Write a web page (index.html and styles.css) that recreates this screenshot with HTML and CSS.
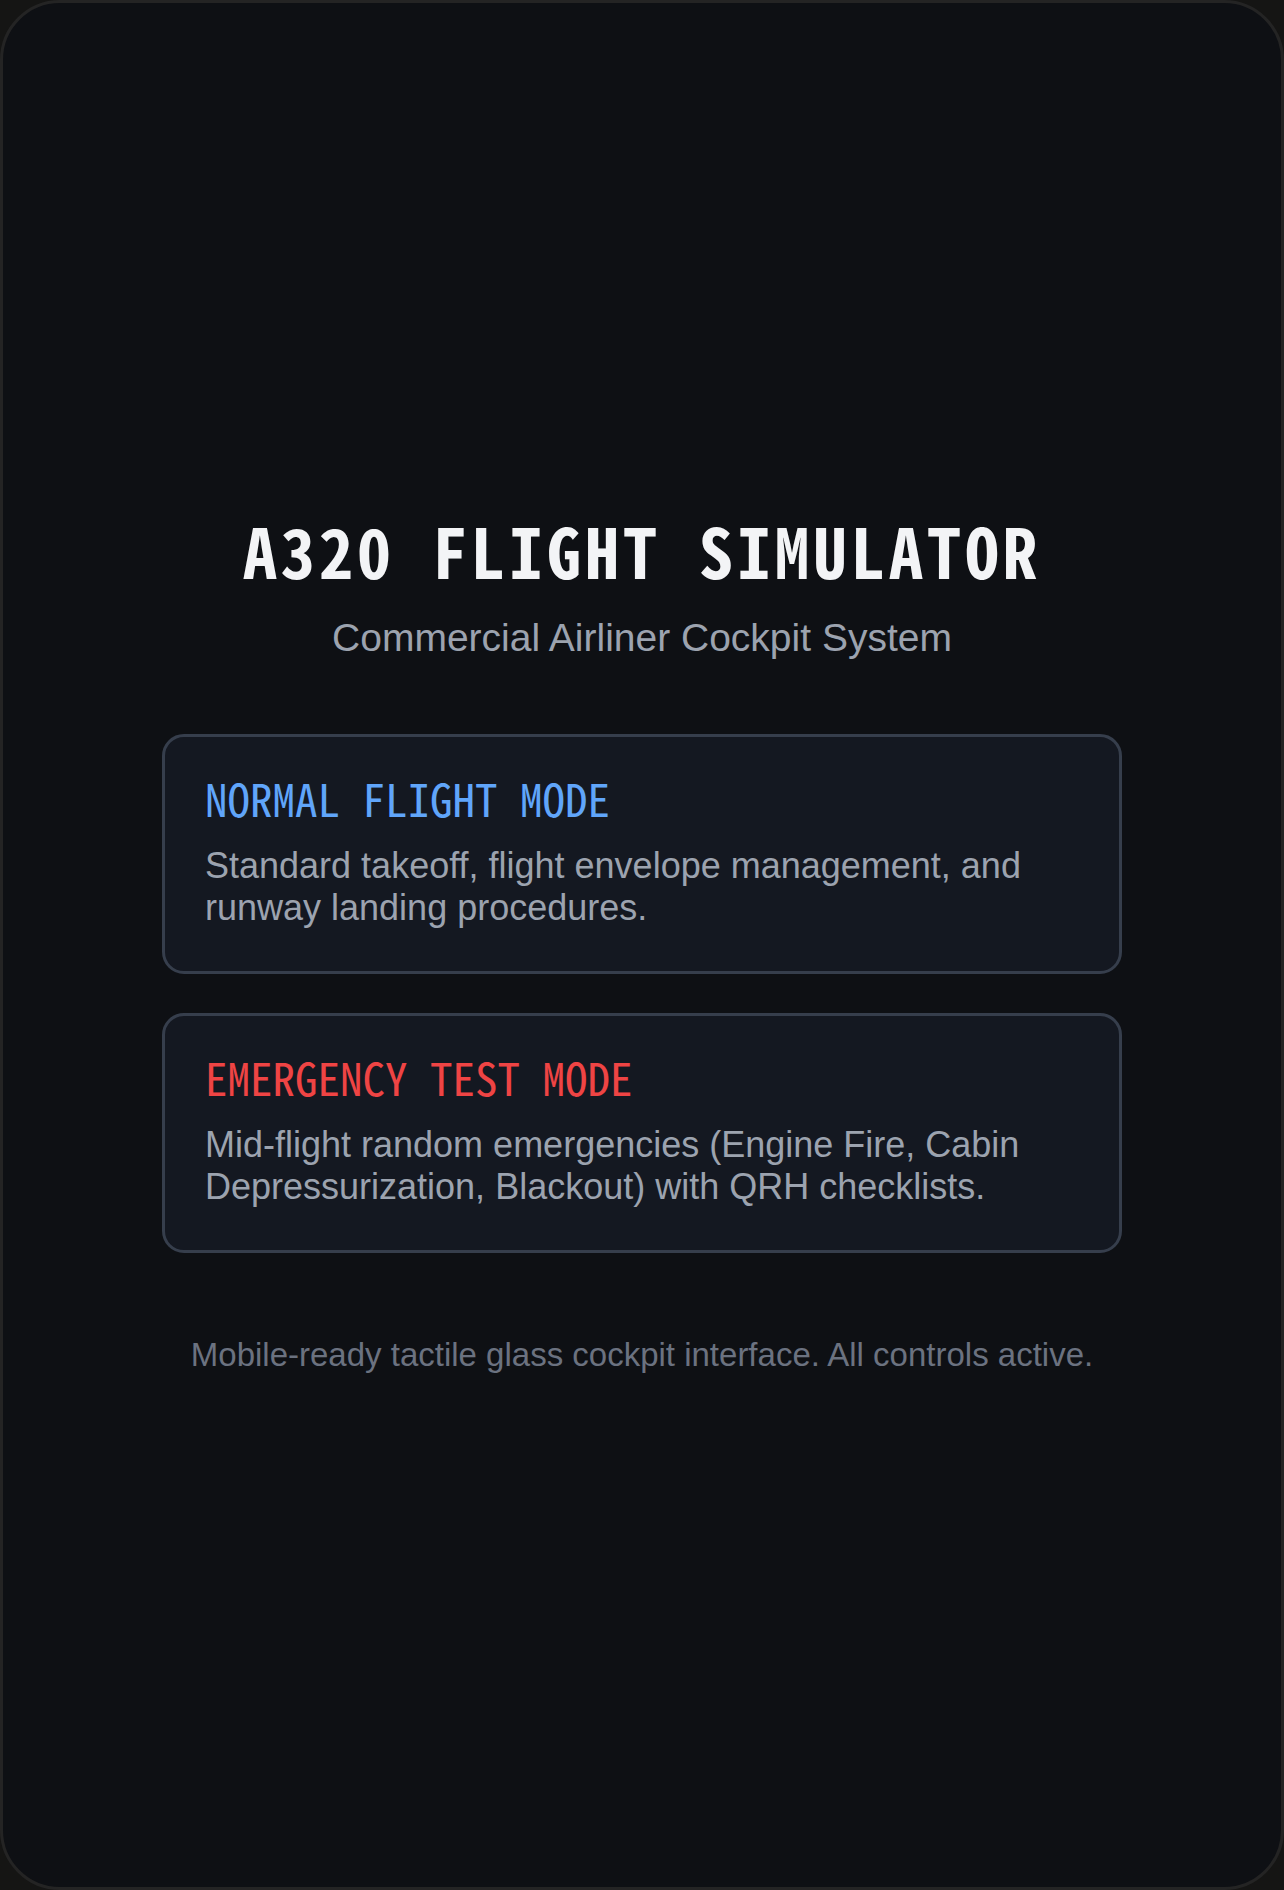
FILE: index.html
```html
<!DOCTYPE html>
<html lang="en">
<head>
<meta charset="utf-8">
<title>A320 Flight Simulator</title>
<link rel="stylesheet" href="styles.css">
</head>
<body>
<div class="frame">
  <main class="menu">
    <h1 class="title">A320 FLIGHT SIMULATOR</h1>
    <p class="subtitle">Commercial Airliner Cockpit System</p>
    <div class="modes">
      <div class="mode-card">
        <h2 class="mode-title mode-normal">NORMAL FLIGHT MODE</h2>
        <p class="mode-desc">Standard takeoff, flight envelope management, and runway landing procedures.</p>
      </div>
      <div class="mode-card">
        <h2 class="mode-title mode-emergency">EMERGENCY TEST MODE</h2>
        <p class="mode-desc">Mid-flight random emergencies (Engine Fire, Cabin Depressurization, Blackout) with QRH checklists.</p>
      </div>
    </div>
    <p class="footer-note">Mobile-ready tactile glass cockpit interface. All controls active.</p>
  </main>
</div>
</body>
</html>
```
FILE: styles.css
```css
html, body {
  margin: 0;
  padding: 0;
  background: #151514;
}

.frame {
  box-sizing: border-box;
  height: 100vh;
  border: 3px solid #242424;
  border-radius: 60px;
  background: #0e1014;
  display: flex;
  align-items: center;
  justify-content: center;
  overflow: hidden;
}

.menu {
  width: 960px;
  display: flex;
  flex-direction: column;
  align-items: center;
}

.title {
  margin: 0;
  font-family: "Noto Sans Mono CJK SC", monospace;
  font-weight: 700;
  font-size: 68px;
  line-height: 68px;
  letter-spacing: 4px;
  color: #f3f4f6;
  text-align: center;
}

.subtitle {
  margin: 31px 0 0;
  font-family: "Liberation Sans", Arial, sans-serif;
  font-size: 39px;
  line-height: 1.2;
  color: #9ca3af;
  text-align: center;
}

.modes {
  align-self: stretch;
  margin-top: 72px;
  display: flex;
  flex-direction: column;
  gap: 39px;
}

.mode-card {
  box-sizing: border-box;
  height: 240px;
  border: 3px solid #363e4c;
  border-radius: 22px;
  background: #141821;
  padding: 38px 40px 42px;
}

.mode-title {
  margin: 0 0 25px;
  font-family: "Noto Sans Mono CJK SC", monospace;
  font-weight: 400;
  font-size: 45px;
  line-height: 45px;
}

.mode-normal {
  color: #60a5fa;
}

.mode-emergency {
  color: #ef4444;
}

.mode-desc {
  margin: 0;
  font-family: "Liberation Sans", Arial, sans-serif;
  font-size: 36px;
  line-height: 42px;
  color: #9ca3af;
}

.footer-note {
  margin: 82px 0 0;
  font-family: "Liberation Sans", Arial, sans-serif;
  font-size: 33px;
  line-height: 1.2;
  color: #6b7280;
  text-align: center;
}
```
